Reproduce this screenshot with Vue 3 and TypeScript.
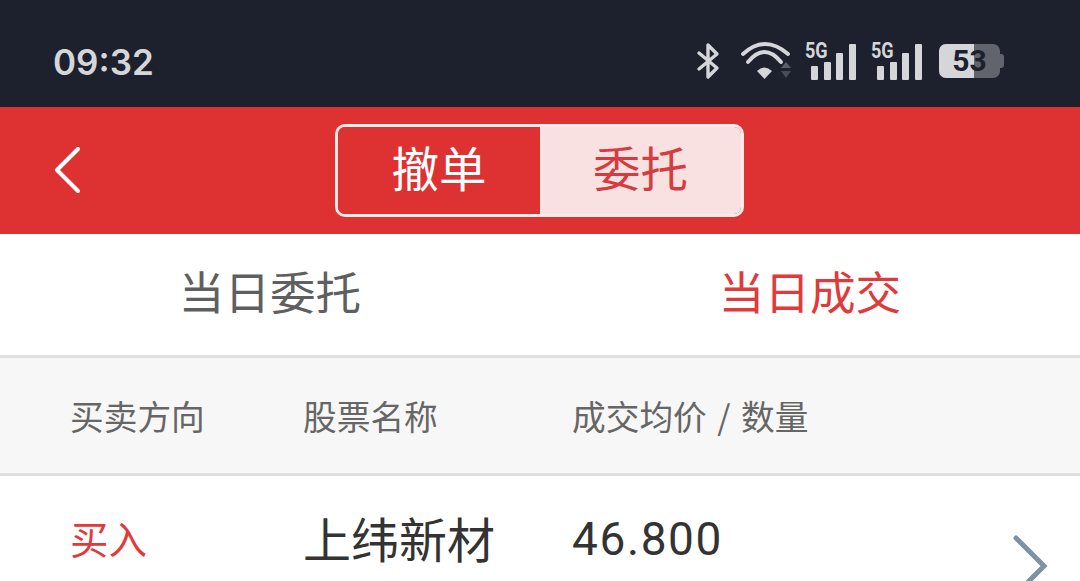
<script setup lang="ts">
const signals: number[] = [0, 1];
</script>

<template>
  <div class="page">
    <header class="status">
      <span class="time">09:32</span>
      <div class="status-icons">
        <svg class="bt" width="24" height="38" viewBox="0 0 24 38" fill="none" stroke="#d4d6da" stroke-width="3.4" stroke-linecap="round" stroke-linejoin="round">
          <path d="M3 11 L21 26 L12 35 V3 L21 12 L3 27" />
        </svg>
        <svg class="wifi" width="52" height="38" viewBox="0 0 52 38" fill="none">
          <path d="M2 12 Q24 -8 47 12" stroke="#d4d6da" stroke-width="3.8" stroke-linecap="round" />
          <path d="M7 20 Q23.5 0 40 20" stroke="#d4d6da" stroke-width="3.8" stroke-linecap="round" />
          <path d="M16 29 Q23.5 22 31 29 L23.5 37 Z" fill="#d4d6da" />
          <path d="M40 26 L50 26 L45 20 Z" fill="#5b5e67" />
          <path d="M40 29 L50 29 L45 36 Z" fill="#4a4d57" />
        </svg>
        <div v-for="s in signals" :key="s" class="signal">
          <span class="fiveg">5G</span>
          <i class="bar b1"></i>
          <i class="bar b2"></i>
          <i class="bar b3"></i>
          <i class="bar b4"></i>
        </div>
        <div class="battery">
          <div class="batt-body">
            <div class="batt-fill"></div>
            <span class="batt-num">53</span>
          </div>
          <div class="batt-tip"></div>
        </div>
      </div>
    </header>

    <nav class="navbar">
      <svg class="back" width="28" height="46" viewBox="0 0 28 46" fill="none" stroke="#fff" stroke-width="4" stroke-linecap="round" stroke-linejoin="round">
        <path d="M24 2 L3 23 L24 44" />
      </svg>
      <div class="segment">
        <div class="seg seg-on">撤单</div>
        <div class="seg seg-off">委托</div>
      </div>
    </nav>

    <div class="tabs">
      <div class="tab">当日委托</div>
      <div class="tab tab-active">当日成交</div>
    </div>

    <div class="thead cols">
      <span>买卖方向</span>
      <span>股票名称</span>
      <span class="thead-wide">成交均价 / 数量</span>
    </div>

    <div class="row cols">
      <span class="dir">买入</span>
      <span class="name">上纬新材</span>
      <span class="price">46.800</span>
      <svg class="chev" width="36" height="62" viewBox="0 0 36 62" fill="none" stroke="#7d92a3" stroke-width="5" stroke-linecap="round" stroke-linejoin="miter">
        <path d="M3 3 L31 31 L3 59" />
      </svg>
    </div>
  </div>
</template>

<style>
html, body { margin: 0; background: #fff; overflow: hidden; }
</style>

<style scoped>
.page {
  width: 1080px;
  height: 581px;
  overflow: hidden;
  background: #fff;
  font-family: "Noto Sans CJK SC", "Noto Sans", sans-serif;
}
.status {
  height: 107px;
  box-sizing: border-box;
  background: #1d212e;
  display: flex;
  align-items: center;
  justify-content: space-between;
  padding: 17px 76px 0 53px;
}
.time {
  font-family: Inter, sans-serif;
  font-weight: 600;
  font-size: 35px;
  color: #d4d6da;
}
.status-icons { display: flex; align-items: center; margin-top: -2px; }
.bt { margin-right: 21px; }
.wifi { margin-right: 12px; }
.signal {
  position: relative;
  width: 52px;
  height: 37px;
  margin-right: 14px;
  display: flex;
  align-items: flex-end;
  gap: 5.6px;
  padding-left: 6px;
  box-sizing: border-box;
}
.fiveg {
  position: absolute;
  left: 0;
  top: -2px;
  font-family: Roboto, sans-serif;
  font-weight: 700;
  font-size: 22px;
  line-height: 20px;
  color: #d4d6da;
  transform: scaleX(0.82);
  transform-origin: left center;
}
.bar { display: block; width: 7px; background: #d4d6da; border-radius: 1px; }
.b1 { height: 14px; }
.b2 { height: 18px; }
.b3 { height: 27px; }
.b4 { height: 36px; }
.battery { display: flex; align-items: center; margin-left: 2px; }
.batt-body {
  position: relative;
  width: 61px;
  height: 34px;
  border-radius: 7px;
  background: #62646d;
  overflow: hidden;
  display: flex;
  align-items: center;
  justify-content: center;
}
.batt-fill { position: absolute; left: 0; top: 0; bottom: 0; width: 35px; background: #d4d6da; }
.batt-num {
  position: relative;
  font-family: Roboto, sans-serif;
  font-weight: 700;
  font-size: 30px;
  line-height: 34px;
  color: #1d212e;
}
.batt-tip { width: 4px; height: 14px; background: #62646d; border-radius: 0 3px 3px 0; }

.navbar {
  position: relative;
  height: 127px;
  background: #de3232;
  display: flex;
  align-items: center;
  justify-content: center;
}
.back { position: absolute; left: 54px; top: 40px; }
.segment {
  width: 409px;
  height: 93px;
  margin-top: -1px;
  margin-left: -1px;
  box-sizing: border-box;
  border: 3px solid #fbeaea;
  border-radius: 10px;
  overflow: hidden;
  display: flex;
}
.seg {
  display: flex;
  align-items: center;
  justify-content: center;
  font-size: 47.5px;
  line-height: 1;
  padding-bottom: 7px;
}
.seg-on { width: 202px; background: #de3232; color: #fff; }
.seg-off { flex: 1; background: #f9e0e1; color: #d63c3f; }

.tabs {
  height: 121px;
  display: flex;
  background: #fff;
  border-bottom: 3px solid #e0e0e0;
}
.tab {
  flex: 1;
  display: flex;
  align-items: center;
  justify-content: center;
  font-size: 45.6px;
  padding-bottom: 9px;
  color: #5f5f5f;
}
.tab-active { color: #e03a3c; }

.cols {
  display: grid;
  grid-template-columns: 233px 269px 1fr;
  align-items: center;
  padding-left: 70px;
}
.thead {
  height: 115px;
  background: #f7f7f7;
  border-bottom: 3px solid #e0e0e0;
  font-size: 33.7px;
  line-height: 110px;
  color: #666;
}
.thead-wide { word-spacing: 3px; }
.row {
  position: relative;
  height: 130px;
  background: #fff;
  color: #333;
}
.dir { font-size: 38.5px; color: #e03a3c; margin-top: -8px; }
.name { font-size: 48px; margin-top: -8px; }
.price { font-family: Roboto, sans-serif; font-size: 46px; letter-spacing: 1.6px; margin-top: -4px; }
.chev { position: absolute; right: 31px; top: 59px; }
</style>
